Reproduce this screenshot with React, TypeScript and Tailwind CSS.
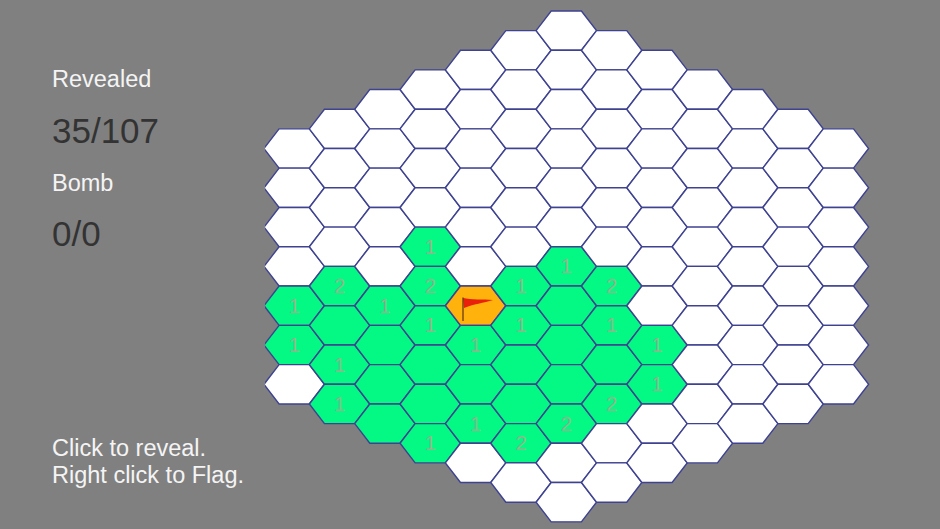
const COL_STEP = 45.35;
const ROW_STEP = 39.3;
const HALF_W = 30.2;
const HALF_TOP = 15.1;
const HALF_H = ROW_STEP / 2;
const FIRST_X = 29.2; // centre of the left column, inside the svg
const MID_Y = 266.4;

// revealed cells: "col:index" -> number shown ('' for a blank one)
const revealed: Record<string, string> = {
  '0:4': '1', '0:5': '1',
  '1:4': '2', '1:5': '', '1:6': '1', '1:7': '1',
  '2:5': '1', '2:6': '', '2:7': '', '2:8': '',
  '3:4': '1', '3:5': '2', '3:6': '1', '3:7': '', '3:8': '', '3:9': '1',
  '4:7': '1', '4:8': '', '4:9': '1',
  '5:6': '1', '5:7': '1', '5:8': '', '5:9': '', '5:10': '2',
  '6:6': '1', '6:7': '', '6:8': '', '6:9': '', '6:10': '2',
  '7:6': '2', '7:7': '1', '7:8': '', '7:9': '2',
  '8:7': '1', '8:8': '1',
};

const FLAG = '4:6';

type Cell = { key: string; x: number; y: number };

function buildCells(): Cell[] {
  const cells: Cell[] = [];
  for (let col = 0; col <= 12; col++) {
    const count = 13 - Math.abs(col - 6);
    for (let i = 0; i < count; i++) {
      cells.push({
        key: `${col}:${i}`,
        x: FIRST_X + col * COL_STEP,
        y: MID_Y + (i - (count - 1) / 2) * ROW_STEP,
      });
    }
  }
  return cells;
}

function hexPoints(x: number, y: number) {
  return [
    [x - HALF_W, y],
    [x - HALF_TOP, y - HALF_H],
    [x + HALF_TOP, y - HALF_H],
    [x + HALF_W, y],
    [x + HALF_TOP, y + HALF_H],
    [x - HALF_TOP, y + HALF_H],
  ]
    .map((p) => p.join(','))
    .join(' ');
}

function fillFor(key: string) {
  if (key === FLAG) return '#ffb20c';
  if (key in revealed) return '#03f884';
  return '#ffffff';
}

function Board() {
  const cells = buildCells();
  return (
    <svg width={675} height={529} viewBox="0 0 675 529" className="block shrink-0">
      {cells.map((c) => (
        <polygon
          key={c.key}
          points={hexPoints(c.x, c.y)}
          fill={fillFor(c.key)}
          stroke="#3f4290"
          strokeWidth={1.4}
        />
      ))}
      {cells.map((c) =>
        revealed[c.key] ? (
          <text
            key={c.key}
            x={c.x}
            y={c.y + 7}
            textAnchor="middle"
            fontSize={20}
            fill="#8fb58c"
            style={{ fontFamily: '"Liberation Sans", sans-serif' }}
          >
            {revealed[c.key]}
          </text>
        ) : null,
      )}
      {/* flag on the marked cell */}
      <path d="M198 298 C206 300 218 299 228 300 C219 303 208 304 199 308 Z" fill="#e8200c" />
      <path d="M198 297.5 V321" stroke="#5c3318" strokeWidth={1.2} fill="none" />
    </svg>
  );
}

export default function App() {
  return (
    <div className="flex h-[529px] w-[940px] overflow-hidden bg-[#808080] font-['Liberation_Sans',sans-serif]">
      <div className="flex w-[265px] shrink-0 flex-col justify-between pl-[52px] pt-[67px] pb-[40px]">
        <div className="flex flex-col">
          <div className="text-[23.5px] leading-[24px] text-[#f4f4f4]">Revealed</div>
          <div className="mt-[20px] text-[35px] leading-[40px] text-[#333333]">35/107</div>
          <div className="mt-[20px] text-[23.5px] leading-[24px] text-[#f4f4f4]">Bomb</div>
          <div className="mt-[19px] text-[35px] leading-[40px] text-[#333333]">0/0</div>
        </div>
        <div className="text-[23.5px] leading-[27px] whitespace-nowrap text-[#f4f4f4]">
          Click to reveal.
          <br />
          Right click to Flag.
        </div>
      </div>
      <Board />
    </div>
  );
}
